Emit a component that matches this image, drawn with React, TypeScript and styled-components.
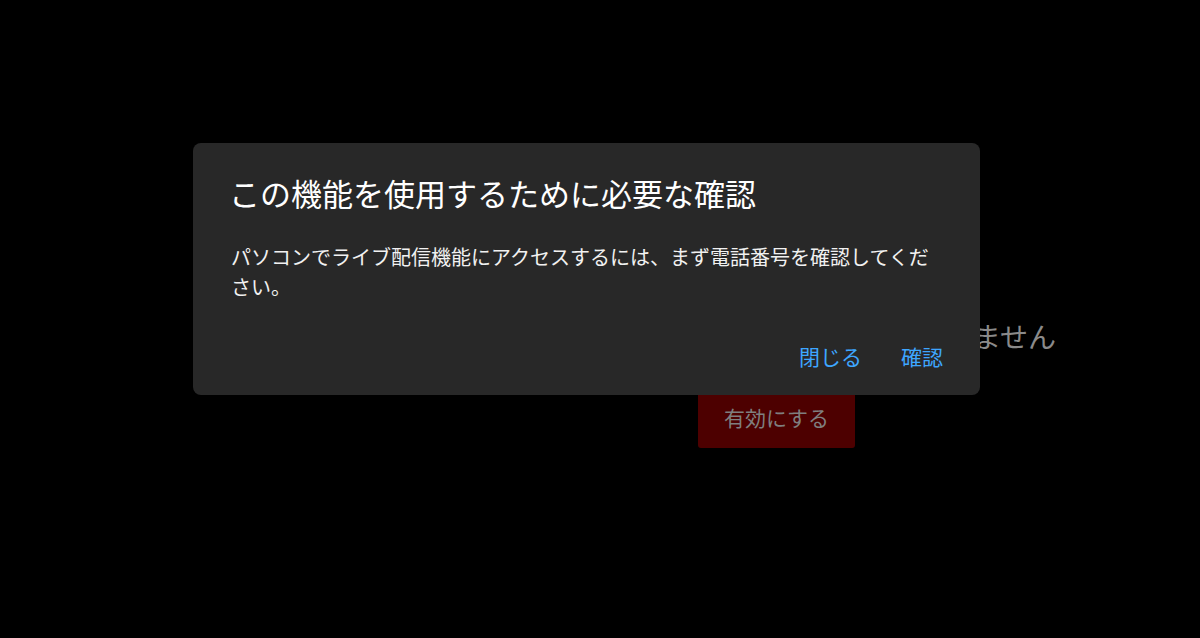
import styled, { createGlobalStyle } from "styled-components";

const GlobalStyle = createGlobalStyle`
  html, body {
    margin: 0;
    padding: 0;
    background: #000;
    font-family: "Noto Sans CJK JP", "Noto Sans", sans-serif;
  }
  * {
    box-sizing: border-box;
  }
`;

const Page = styled.div`
  position: relative;
  width: 1200px;
  height: 638px;
  overflow: hidden;
  background: #000;
`;

const Main = styled.main`
  margin-left: 353px;
  padding-top: 316px;
  display: flex;
  flex-direction: column;
  align-items: center;
  gap: 30px;
`;

const Message = styled.p`
  margin: 0;
  font-size: 28px;
  line-height: 40px;
  color: #8a8a8a;
  white-space: nowrap;
`;

const EnableButton = styled.button`
  height: 62px;
  padding: 0 26px;
  border: none;
  border-radius: 3px;
  background: #4d0000;
  color: #7f7f7f;
  font-family: inherit;
  font-size: 21px;
  cursor: pointer;
`;

const Overlay = styled.div`
  position: absolute;
  inset: 0;
  padding: 143px 0 0 193px;
`;

const Dialog = styled.div`
  width: 787px;
  height: 252px;
  background: #282828;
  border-radius: 8px;
  padding: 30px 38px 0;
  display: flex;
  flex-direction: column;
`;

const Title = styled.h2`
  margin: 0 0 0 -2px;
  font-size: 31px;
  font-weight: 400;
  line-height: 40px;
  color: #fff;
`;

const Body = styled.p`
  margin: 29px 0 0;
  font-size: 20px;
  line-height: 30px;
  color: #f1f1f1;
`;

const Footer = styled.div`
  margin: auto -17px 16px 0;
  display: flex;
  justify-content: flex-end;
  gap: 7px;
`;

const TextButton = styled.button`
  padding: 8px 16px;
  border: none;
  background: transparent;
  color: #3ea6ff;
  font-family: inherit;
  font-size: 21px;
  line-height: 30px;
  cursor: pointer;
`;

export default function App() {
  return (
    <>
      <GlobalStyle />
      <Page>
        <Main>
          <Message>ライブ配信機能は現在ご利用いただけません</Message>
          <EnableButton>有効にする</EnableButton>
        </Main>
        <Overlay>
          <Dialog role="dialog">
            <Title>この機能を使用するために必要な確認</Title>
            <Body>
              パソコンでライブ配信機能にアクセスするには、まず電話番号を確認してください。
            </Body>
            <Footer>
              <TextButton>閉じる</TextButton>
              <TextButton>確認</TextButton>
            </Footer>
          </Dialog>
        </Overlay>
      </Page>
    </>
  );
}
